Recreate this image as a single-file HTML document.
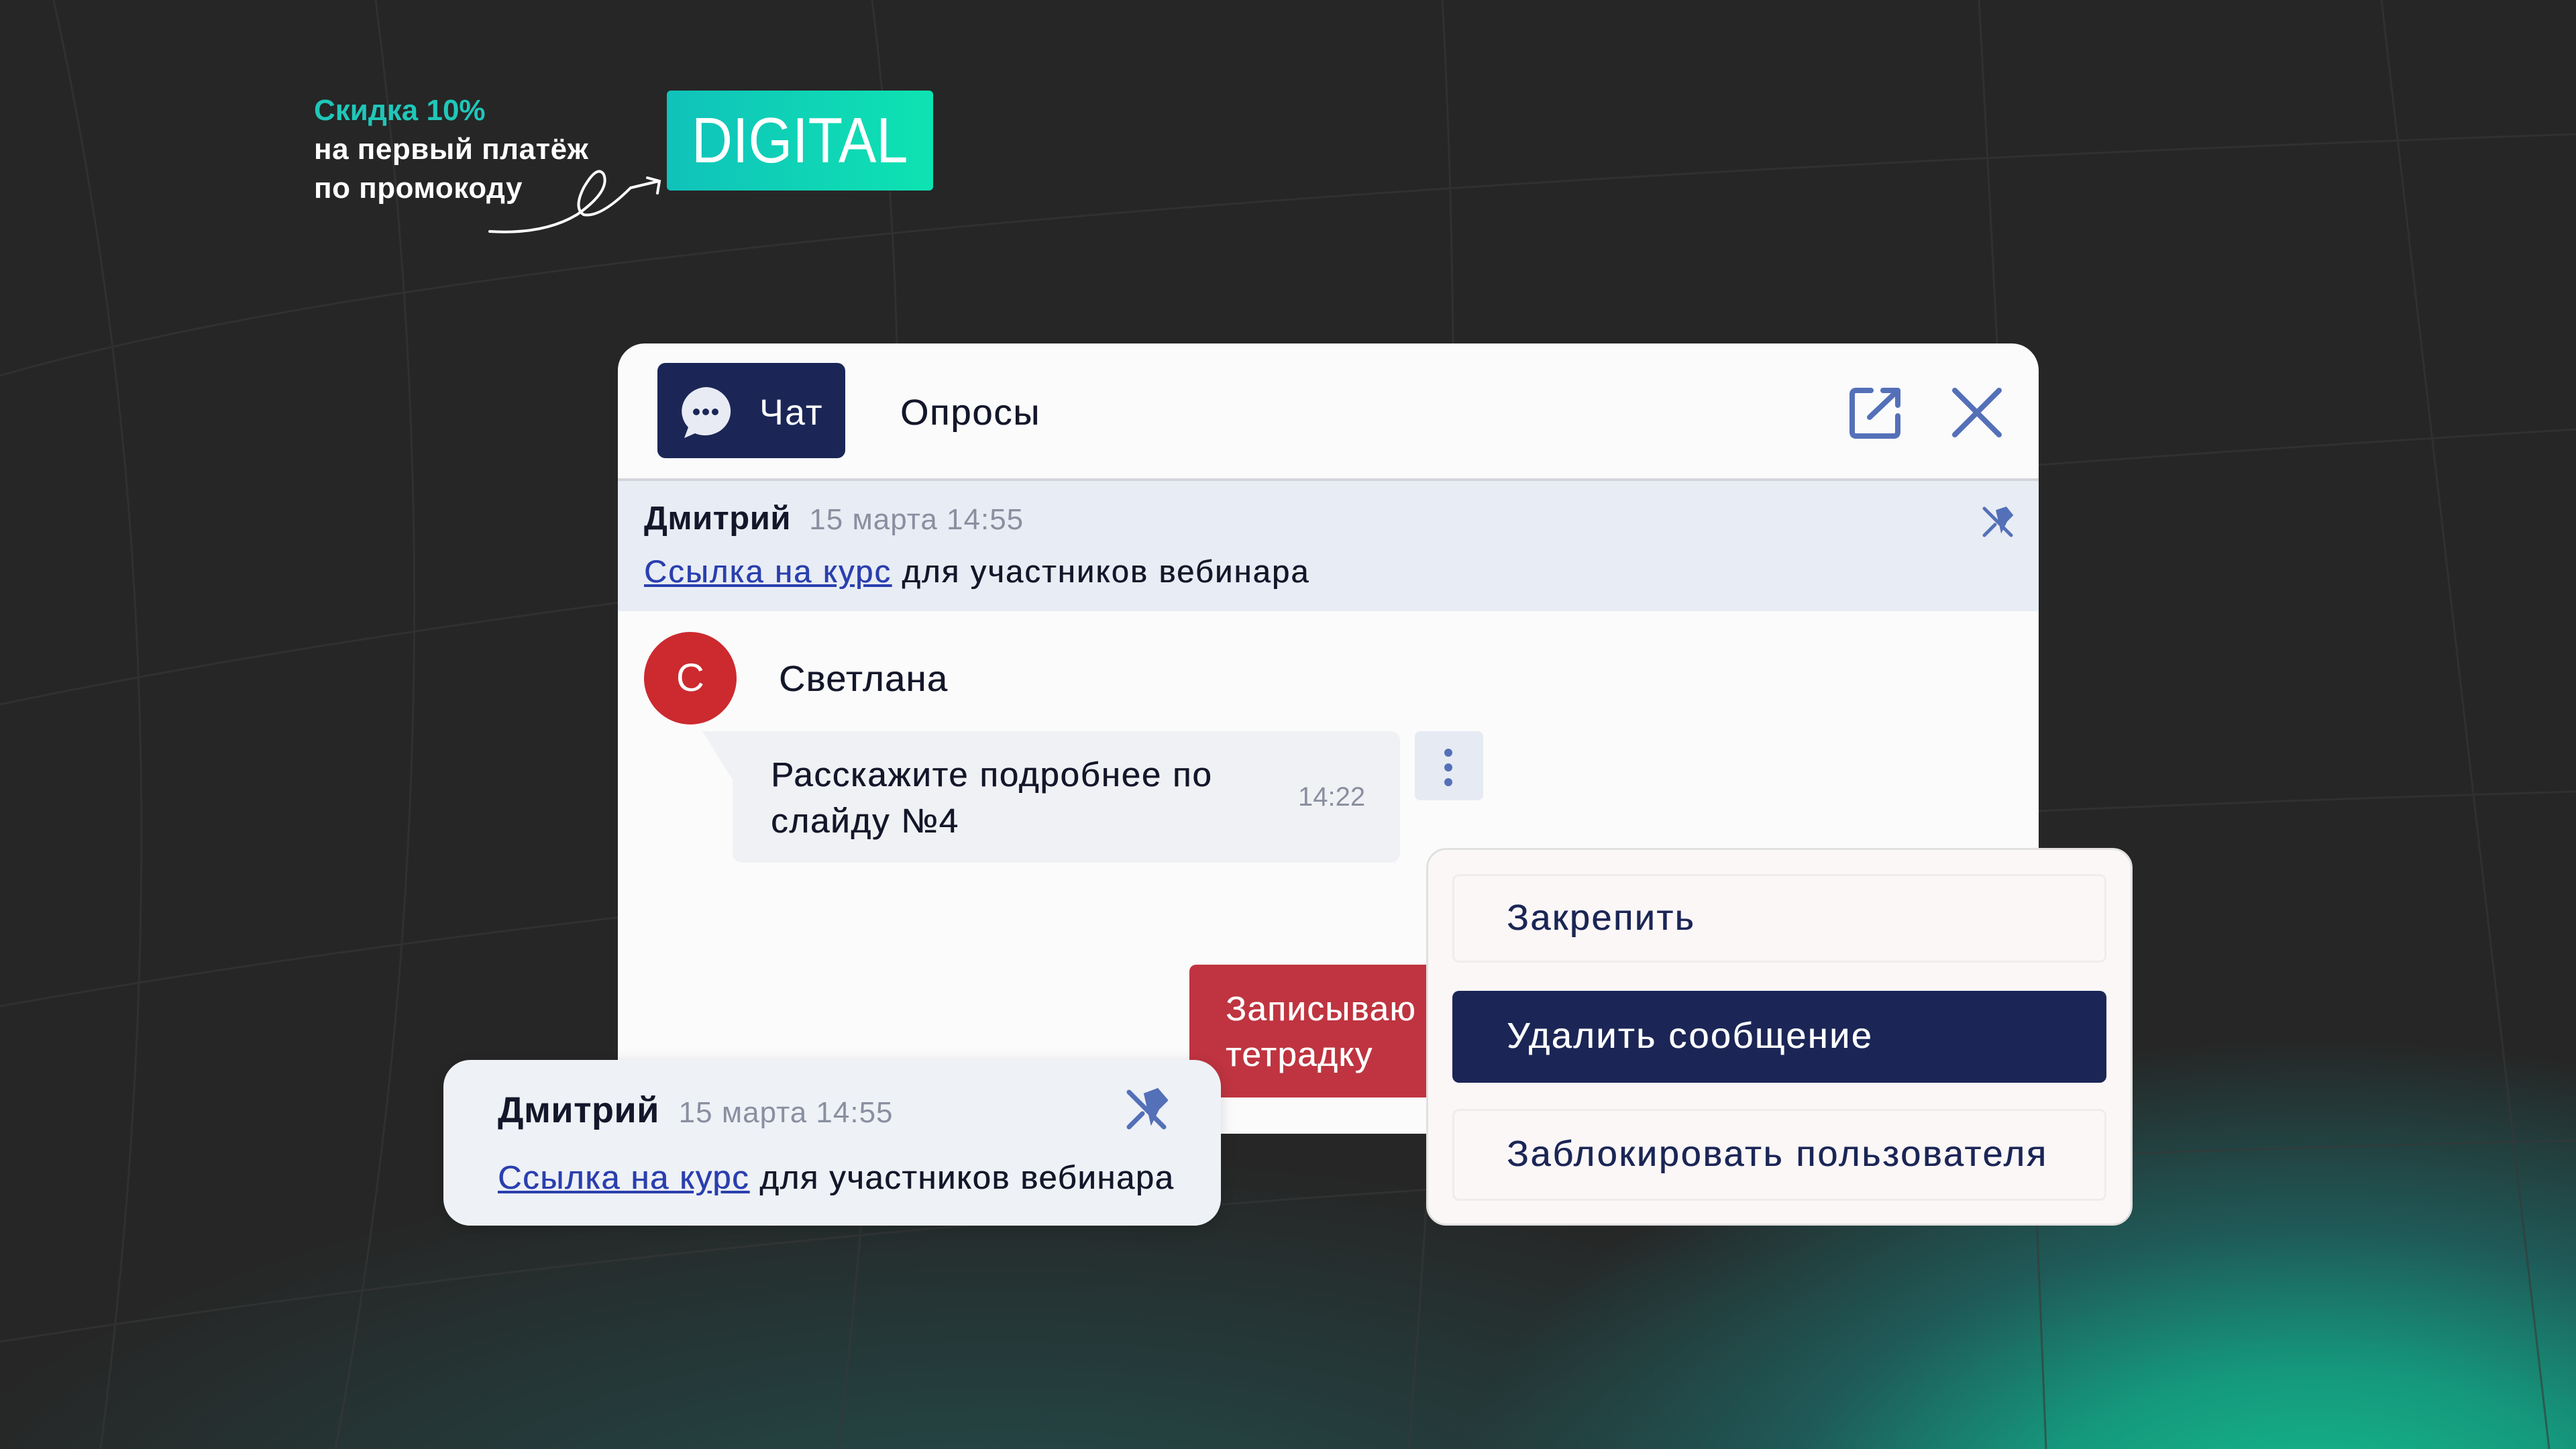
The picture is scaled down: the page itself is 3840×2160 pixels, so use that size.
<!DOCTYPE html>
<html><head><meta charset="utf-8"><style>
*{margin:0;padding:0;box-sizing:border-box}
body{width:3840px;height:2160px;overflow:hidden;position:relative;font-family:"Liberation Sans","Noto Sans CJK SC",sans-serif;
background:radial-gradient(ellipse 1300px 750px at 3450px 2300px,#14c490 0%,#15977c 35%,#1f5a58 62%,rgba(38,42,44,0) 100%),radial-gradient(ellipse 2400px 900px at 1500px 2350px,#23504f 0%,rgba(38,40,40,0) 70%),#262626;}
.a{position:absolute}
.t{white-space:nowrap}
.m{text-shadow:0.6px 0 0 currentColor}
</style></head><body>
<svg class="a" style="left:0;top:0" width="3840" height="2160" fill="none" stroke="#383838" stroke-width="3" opacity="0.6">
<path d="M0 560 Q900 300 3840 200"/><path d="M0 1050 Q1200 800 3840 640"/><path d="M0 1500 Q1400 1250 3840 1180"/><path d="M0 2000 Q1600 1750 3840 1700"/>
<path d="M80 0 Q300 1000 150 2160"/><path d="M560 0 Q700 1100 500 2160"/><path d="M1300 0 Q1400 800 1250 2160"/><path d="M2150 0 Q2200 900 2100 2160"/><path d="M2950 0 Q3000 900 3050 2160"/><path d="M3550 0 Q3650 900 3800 2160"/>
</svg>

<div class="a t" style="left:468px;top:136px;font-size:44px;font-weight:bold;color:#1fc7b9;line-height:58px">Скидка 10%</div>
<div class="a t" style="left:468px;top:194px;font-size:44px;font-weight:bold;color:#fff;line-height:58px;letter-spacing:0.5px">на первый платёж<br>по промокоду</div>
<svg class="a" style="left:720px;top:240px" width="280" height="120" fill="none" stroke="#fff" stroke-width="4" stroke-linecap="round">
<path d="M10 105 Q90 110 140 80 Q190 45 180 20 Q170 5 150 40 Q135 70 150 80 Q175 85 220 40 L262 30"/><path d="M245 25 L263 30 L260 48"/>
</svg>
<div class="a" style="left:994px;top:135px;width:397px;height:149px;border-radius:6px;background:linear-gradient(90deg,#10c2ba,#0ee3b2);color:#fff;font-size:96px;text-align:center;line-height:149px"><span style="display:inline-block;transform:scaleX(0.88)">DIGITAL</span></div>

<div class="a" style="left:921px;top:512px;width:2118px;height:1178px;background:#fbfbfc;border-radius:40px;overflow:hidden">
 <div class="a" style="left:0;top:201px;width:100%;height:4px;background:#d3d5da"></div>
 <div class="a" style="left:59px;top:29px;width:280px;height:142px;background:#1b2656;border-radius:12px">
  <svg class="a" style="left:30px;top:32px" width="84" height="84"><path d="M42 4 A38 36 0 1 1 26 73 L10 80 L16 64 A38 36 0 0 1 42 4Z" fill="#e8ebf4"/><circle cx="28" cy="41" r="5" fill="#1b2656"/><circle cx="42" cy="41" r="5" fill="#1b2656"/><circle cx="56" cy="41" r="5" fill="#1b2656"/></svg>
  <div class="a t" style="left:152px;top:43px;font-size:54px;color:#fff;letter-spacing:2px">Чат</div>
 </div>
 <div class="a t m" style="left:421px;top:72px;font-size:54px;color:#14172a;letter-spacing:2px">Опросы</div>
 <svg class="a" style="left:1836px;top:66px" width="80" height="80" fill="none" stroke="#5470b8" stroke-width="8" stroke-linecap="round" stroke-linejoin="round"><path d="M32 4 H10 Q4 4 4 10 V66 Q4 72 10 72 H66 Q72 72 72 66 V42"/><path d="M30 44 L70 6 M50 4 H72 V26"/></svg>
 <svg class="a" style="left:1989px;top:66px" width="76" height="76" stroke="#5470b8" stroke-width="8" stroke-linecap="round"><path d="M4 4 L70 70 M70 4 L4 70"/></svg>
 <div class="a" style="left:0;top:205px;width:100%;height:194px;background:#e8ecf4"></div>
 <div class="a t" style="left:39px;top:233px;font-size:49px;font-weight:bold;color:#14172a;letter-spacing:0.5px">Дмитрий <span style="font-weight:normal;color:#8a8fa0;font-size:44px;letter-spacing:1px">&nbsp;15 марта 14:55</span></div>
 <div class="a t m" style="left:39px;top:312px;font-size:47px;color:#14172a;letter-spacing:2.2px"><span style="color:#2a3fae;text-decoration:underline">Ссылка на курс</span> для участников вебинара</div>
 <svg class="a" style="left:2033px;top:242px" width="48" height="48" stroke="#5470b8" stroke-width="5" stroke-linecap="round"><path d="M24 8 L36 4 L44 14 L36 22 L30 34 Z" fill="#5470b8"/><path d="M4 4 L44 44 M4 44 L20 28"/></svg>
 <div class="a" style="left:39px;top:430px;width:138px;height:138px;border-radius:50%;background:#cc2a2f;color:#fff;font-size:58px;text-align:center;line-height:138px">С</div>
 <div class="a t m" style="left:240px;top:469px;font-size:54px;color:#14172a;letter-spacing:1.5px">Светлана</div>
 <div class="a" style="left:171px;top:578px;width:995px;height:196px;background:#f0f1f4;border-radius:0 14px 14px 14px"></div>
 <svg class="a" style="left:126px;top:578px" width="50" height="80"><path d="M0 0 H50 V80 Z" fill="#f0f1f4"/></svg>
 <div class="a t m" style="left:228px;top:608px;font-size:51px;color:#14172a;line-height:69px;letter-spacing:1.8px">Расскажите подробнее по<br>слайду №4</div>
 <div class="a t" style="left:1014px;top:654px;font-size:40px;color:#8a8fa0">14:22</div>
 <div class="a" style="left:1188px;top:578px;width:102px;height:103px;background:#e6eaf3;border-radius:8px"></div>
 <svg class="a" style="left:1228px;top:600px" width="20" height="64" fill="#5470b8"><circle cx="10" cy="10" r="6"/><circle cx="10" cy="32" r="6"/><circle cx="10" cy="54" r="6"/></svg>
 <div class="a" style="left:852px;top:926px;width:400px;height:198px;background:#bf3440;border-radius:10px 0 0 10px"></div>
 <div class="a t m" style="left:906px;top:958px;font-size:51px;color:#fff;line-height:68px;letter-spacing:1.5px">Записываю<br>тетрадку</div>
</div>

<div class="a" style="left:661px;top:1580px;width:1159px;height:247px;background:#eef1f6;border-radius:40px;box-shadow:0 4px 20px rgba(0,0,0,.15)">
 <div class="a t" style="left:81px;top:44px;font-size:54px;font-weight:bold;color:#14172a;letter-spacing:0.5px">Дмитрий <span style="font-weight:normal;color:#8a8fa0;font-size:44px;letter-spacing:1px">&nbsp;15 марта 14:55</span></div>
 <div class="a t m" style="left:81px;top:148px;font-size:49px;color:#14172a;letter-spacing:1.6px"><span style="color:#2a3fae;text-decoration:underline">Ссылка на курс</span> для участников вебинара</div>
 <svg class="a" style="left:1016px;top:42px" width="64" height="64" stroke="#5470b8" stroke-width="7" stroke-linecap="round"><path d="M32 10 L48 4 L60 18 L48 30 L40 46 Z" fill="#5470b8"/><path d="M6 6 L58 58 M6 58 L26 38"/></svg>
</div>

<div class="a" style="left:2126px;top:1264px;width:1053px;height:563px;background:#fcf7f7;border-radius:30px;border:3px solid #e2e0e0">
 <div class="a" style="left:36px;top:36px;width:975px;height:132px;border:3px solid #f1ecec;border-radius:10px"></div>
 <div class="a t m" style="left:117px;top:70px;font-size:54px;color:#1b2656;letter-spacing:2.5px">Закрепить</div>
 <div class="a" style="left:36px;top:210px;width:975px;height:137px;background:#1b2656;border-radius:10px"></div>
 <div class="a t m" style="left:117px;top:246px;font-size:54px;color:#fff;letter-spacing:2.5px">Удалить сообщение</div>
 <div class="a" style="left:36px;top:386px;width:975px;height:137px;border:3px solid #f1ecec;border-radius:10px"></div>
 <div class="a t m" style="left:117px;top:422px;font-size:54px;color:#1b2656;letter-spacing:2.8px">Заблокировать пользователя</div>
</div>
</body></html>
